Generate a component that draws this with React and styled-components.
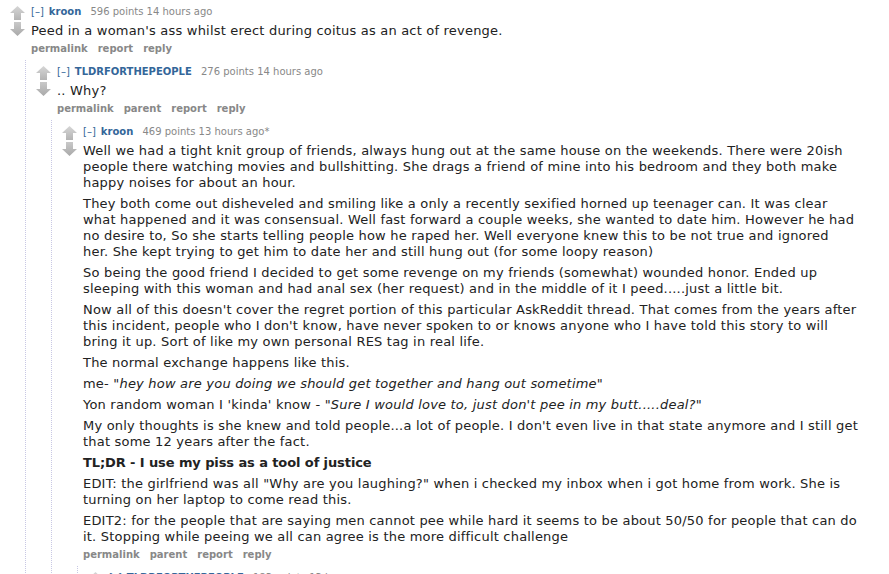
import React from "react";
import styled, { createGlobalStyle } from "styled-components";

const Global = createGlobalStyle`
  html, body { margin: 0; padding: 0; background: #fff; }
  body { font-family: Verdana, "DejaVu Sans", sans-serif; color: #222; }
`;

const Page = styled.div`
  width: 889px;
  height: 574px;
  overflow: hidden;
`;

const CommentBox = styled.div`
  display: flex;
  flex-direction: column;
  padding-top: 5px;
`;

const Row = styled.div`
  display: flex;
  align-items: flex-start;
`;

const Midcol = styled.div`
  width: 15px;
  margin: 1px 6px 0 10px;
  display: flex;
  flex-direction: column;
  gap: 2px;
  flex-shrink: 0;
`;

const Entry = styled.div`
  flex: 1;
  min-width: 0;
`;

const Tagline = styled.div`
  font-size: 10px;
  line-height: 13px;
  color: #888;
  white-space: nowrap;
`;

const Expand = styled.span`
  color: #369;
  margin-right: 2px;
`;

const Author = styled.span`
  color: #369;
  font-weight: bold;
  margin-right: 6px;
  margin-left: 3px;
`;

const Body = styled.div`
  margin-top: 5px;
  font-size: 13px;
  line-height: 16px;
  letter-spacing: 0.2px;
  color: #222;
`;

const P = styled.p`
  margin: 0 0 5px 0;
  white-space: nowrap;
  font-weight: ${(p) => (p.$bold ? "bold" : "normal")};
  letter-spacing: ${(p) => (p.$bold ? "-0.1px" : "inherit")};
  &:last-child { margin-bottom: 0; }
`;

const Buttons = styled.ul`
  list-style: none;
  margin: 4px 0 0 0;
  padding: 0;
  display: flex;
  gap: 10px;
  font-size: 10px;
  line-height: 12px;
  font-weight: bold;
  color: #888;
`;

const Child = styled.div`
  margin-top: 5px;
  margin-left: 25px;
  border-left: 1px dotted #c8c8e4;
`;

const Arrow = ({ down }) => (
  <svg width="15" height="14" viewBox="0 0 15 14">
    <defs>
      <linearGradient id={down ? "gd" : "gu"} x1="0" y1="0" x2="0" y2="1">
        <stop offset="0" stopColor={down ? "#c9c9c9" : "#d6d6d6"} />
        <stop offset="1" stopColor={down ? "#a9a9a9" : "#b4b4b4"} />
      </linearGradient>
    </defs>
    <path
      d={
        down
          ? "M7.5 14 L15 7 L11 7 L11 0 L4 0 L4 7 L0 7 Z"
          : "M7.5 0 L15 7 L11 7 L11 14 L4 14 L4 7 L0 7 Z"
      }
      fill={`url(#${down ? "gd" : "gu"})`}
    />
  </svg>
);

const Comment = ({ author, meta, buttons, children, body }) => (
  <CommentBox>
    <Row>
      <Midcol>
        <Arrow />
        <Arrow down />
      </Midcol>
      <Entry>
        <Tagline>
          <Expand>[–]</Expand>
          <Author>{author}</Author> {meta}
        </Tagline>
        {body && <Body>{body}</Body>}
        {buttons && (
          <Buttons>
            {buttons.map((b) => (
              <li key={b}>{b}</li>
            ))}
          </Buttons>
        )}
      </Entry>
    </Row>
    {children && <Child>{children}</Child>}
  </CommentBox>
);

export default function App() {
  return (
    <Page>
      <Global />
      <Comment
        author="kroon"
        meta="596 points 14 hours ago"
        body={<P>Peed in a woman's ass whilst erect during coitus as an act of revenge.</P>}
        buttons={["permalink", "report", "reply"]}
      >
        <Comment
          author="TLDRFORTHEPEOPLE"
          meta="276 points 14 hours ago"
          body={<P>.. Why?</P>}
          buttons={["permalink", "parent", "report", "reply"]}
        >
          <Comment
            author="kroon"
            meta="469 points 13 hours ago*"
            body={
              <>
                <P>
                  Well we had a tight knit group of friends, always hung out at the same house on the weekends. There were 20ish
                  <br />
                  people there watching movies and bullshitting. She drags a friend of mine into his bedroom and they both make
                  <br />
                  happy noises for about an hour.
                </P>
                <P>
                  They both come out disheveled and smiling like a only a recently sexified horned up teenager can. It was clear
                  <br />
                  what happened and it was consensual. Well fast forward a couple weeks, she wanted to date him. However he had
                  <br />
                  no desire to, So she starts telling people how he raped her. Well everyone knew this to be not true and ignored
                  <br />
                  her. She kept trying to get him to date her and still hung out (for some loopy reason)
                </P>
                <P>
                  So being the good friend I decided to get some revenge on my friends (somewhat) wounded honor. Ended up
                  <br />
                  sleeping with this woman and had anal sex (her request) and in the middle of it I peed.....just a little bit.
                </P>
                <P>
                  Now all of this doesn't cover the regret portion of this particular AskReddit thread. That comes from the years after
                  <br />
                  this incident, people who I don't know, have never spoken to or knows anyone who I have told this story to will
                  <br />
                  bring it up. Sort of like my own personal RES tag in real life.
                </P>
                <P>The normal exchange happens like this.</P>
                <P>
                  me- <em>"hey how are you doing we should get together and hang out sometime"</em>
                </P>
                <P>
                  Yon random woman I 'kinda' know - <em>"Sure I would love to, just don't pee in my butt.....deal?"</em>
                </P>
                <P>
                  My only thoughts is she knew and told people...a lot of people. I don't even live in that state anymore and I still get
                  <br />
                  that some 12 years after the fact.
                </P>
                <P $bold>TL;DR - I use my piss as a tool of justice</P>
                <P>
                  EDIT: the girlfriend was all "Why are you laughing?" when i checked my inbox when i got home from work. She is
                  <br />
                  turning on her laptop to come read this.
                </P>
                <P>
                  EDIT2: for the people that are saying men cannot pee while hard it seems to be about 50/50 for people that can do
                  <br />
                  it. Stopping while peeing we all can agree is the more difficult challenge
                </P>
              </>
            }
            buttons={["permalink", "parent", "report", "reply"]}
          >
            <Comment
              author="TLDRFORTHEPEOPLE"
              meta="183 points 13 hours ago"
              body={<P>Justice served.</P>}
              buttons={["permalink", "parent", "report", "reply"]}
            />
          </Comment>
        </Comment>
      </Comment>
    </Page>
  );
}
